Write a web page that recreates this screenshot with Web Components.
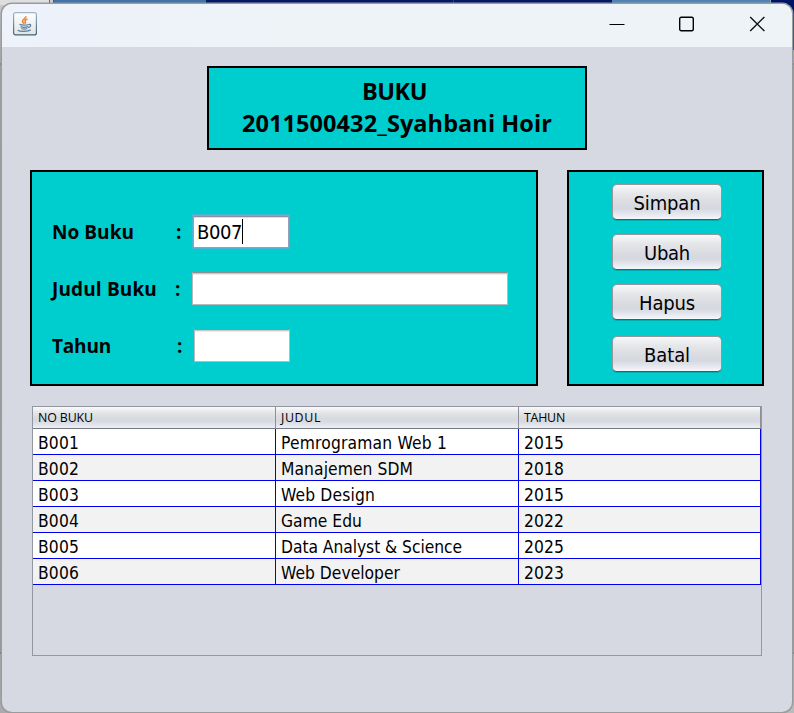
<!DOCTYPE html>
<html lang="id">
<head>
<meta charset="utf-8">
<title>Buku</title>
<style>
html,body{margin:0;width:794px;height:713px;overflow:hidden}
body{font-family:"Open Sans","Noto Sans",sans-serif;color:#000}
</style>
</head>
<body>
<book-desktop>
  <book-window>
    <panel-box slot="title" style="width:380px;height:84px"><book-heading></book-heading></panel-box>
    <panel-box slot="form" style="width:508px;height:216px">
      <form-row style="margin-top:42px" label="No Buku" lw="82" colon="124" fx="140" fw="98" value="B007" focused></form-row>
      <form-row style="margin-top:22px" label="Judul Buku" lw="105" colon="123" fx="140" fw="316"></form-row>
      <form-row style="margin-top:22px" label="Tahun" lw="59" colon="125" fx="142" fw="96"></form-row>
    </panel-box>
    <panel-box slot="actions" style="width:197px;height:216px">
      <push-button style="margin-top:12px" w="67">Simpan</push-button>
      <push-button style="margin-top:14px" w="46">Ubah</push-button>
      <push-button style="margin-top:14px" w="56">Hapus</push-button>
      <push-button style="margin-top:16px" w="46">Batal</push-button>
    </panel-box>
    <book-table slot="table"></book-table>
  </book-window>
</book-desktop>
<script>
const define=(name,html,init)=>customElements.define(name,class extends HTMLElement{
  connectedCallback(){
    if(this.shadowRoot)return;
    this.attachShadow({mode:'open'}).innerHTML=typeof html==='function'?html(this):html;
    if(init)init(this,this.shadowRoot);
  }
});

/* A single line of text whose tracking is adjusted to a given width. */
define('fit-text','<style>:host{display:inline-block;white-space:pre}span{display:inline-block}</style><span><slot></slot></span>',(el,root)=>{
  const span=root.querySelector('span'),want=+el.getAttribute('w'),n=el.textContent.length;
  if(want){
    const have=span.getBoundingClientRect().width;
    span.style.letterSpacing=((want-have)/n)+'px';
  }
});

define('panel-box','<style>:host{display:block;box-sizing:border-box;border:2px solid #000;background:#00cdcd}</style><slot></slot>');

define('book-heading',`<style>
:host{display:flex;flex-direction:column;align-items:center;padding-top:7px;font:700 23.5px/33px "Open Sans","Noto Sans",sans-serif}
fit-text{height:32px}
.a{margin-right:5px}
</style><fit-text class="a" w="65">BUKU</fit-text><fit-text w="310">2011500432_Syahbani Hoir</fit-text>`);

define('form-row',el=>{
  const a=k=>el.getAttribute(k);
  return `<style>
:host{display:grid;grid-template-columns:${a('colon')}px ${a('fx')-a('colon')}px ${a('fw')}px;align-items:center;padding-left:20px;height:35px}
.l{font:700 19px/34px "Open Sans","Noto Sans",sans-serif}
.f{box-sizing:border-box;height:33px;background:#fff;border:1px solid #b8babd;border-top-color:#8d8e92;box-shadow:inset 0 1px #c9c9cb,inset 0 2px #ececec;
 display:flex;align-items:center;font:20px/26px "DejaVu Sans Condensed","DejaVu Sans",sans-serif;font-stretch:condensed}
:host([focused]) .f{height:35px;border:1px solid #49b3d0;box-shadow:inset 0 0 0 1px #9b9eb8,inset 0 2px #8d8fa4,inset 0 3px #dddde2;padding-left:4px}
i{width:1px;height:25px;background:#000}
</style><fit-text class="l" w="${a('lw')}">${a('label')}</fit-text><span class="l">:</span><div class="f">${a('value')?`<fit-text w="45">${a('value')}</fit-text><i></i>`:''}</div>`;
});

define('push-button',el=>`<style>
:host{display:block;width:110px;height:36px;margin-left:43px}
button{all:unset;box-sizing:border-box;display:flex;justify-content:center;align-items:center;width:110px;height:36px;padding-top:1px;border:1px solid #95979d;border-bottom-color:#4e5560;border-radius:5px;
 background:linear-gradient(#f8f8fa,#e6e7ea 25%,#dadce1 52%,#d5d8e0 70%,#e9ecf2 90%,#f5f7fb);box-shadow:0 1px rgba(0,80,90,.25);
 font:20px/26px "DejaVu Sans Condensed","DejaVu Sans",sans-serif;font-stretch:condensed}
</style><button><fit-text w="${el.getAttribute('w')}">${el.textContent}</fit-text></button>`);

const rows=[['B001','Pemrograman Web 1','2015',166],['B002','Manajemen SDM','2018',132],['B003','Web Design','2015',94],
 ['B004','Game Edu','2022',81],['B005','Data Analyst & Science','2025',181],['B006','Web Developer','2023',119]];
const esc=s=>s.replace('&','&amp;');
define('book-table',()=>`<style>
:host{display:block;box-sizing:border-box;width:730px;height:250px;border:1px solid #9297a1}
.r{display:grid;grid-template-columns:243px 243px 242px}
.r>div{box-sizing:border-box;padding-left:5px;height:26px;border-right:1px solid #0000f0;border-bottom:1px solid #0000f0;background:#fff;
 font:17.3px/28px "DejaVu Sans Condensed","DejaVu Sans",sans-serif;font-stretch:condensed}
.r.alt>div{background:#f2f2f2}
.r.h>div{height:22px;font:12.4px/22px "Open Sans","Noto Sans",sans-serif;border-color:#8d9098;border-bottom-color:#747983;
 background:linear-gradient(#fafafb,#e3e4e7 28%,#d8dadf 55%,#d6d9e0 68%,#eceff4)}
</style><div class="r h"><div><fit-text w="55">NO BUKU</fit-text></div><div><fit-text w="40">JUDUL</fit-text></div><div><fit-text w="41">TAHUN</fit-text></div></div>`+
rows.map((r,i)=>`<div class="r${i%2?' alt':''}"><div><fit-text w="41">${r[0]}</fit-text></div><div><fit-text w="${r[3]}">${esc(r[1])}</fit-text></div><div><fit-text w="40">${r[2]}</fit-text></div></div>`).join(''));

define('java-icon',`<style>:host{display:block;width:24px;height:24px}svg{display:block}</style>
<svg width="24" height="24" viewBox="0 0 24 24"><defs><linearGradient id="g" x2="0" y2="1"><stop stop-color="#fff"/><stop offset="1" stop-color="#e2e3e4"/></linearGradient><linearGradient id="b" x2="0" y2="1"><stop stop-color="#a3b5c8"/><stop offset="1" stop-color="#3f6478"/></linearGradient></defs>
<rect x=".6" y=".6" width="22.8" height="22.3" rx="2" fill="url(#g)" stroke="url(#b)" stroke-width="1.2"/>
<path d="M12.8 4.3c.8 2-3.600 2.900-3.300 5 .1 1 1 1.600 1.600 2.400M14.500 7c-1.800.7-3 1.500-2.300 2.600.6.9.3 1.500-.5 2.100" fill="none" stroke="#ee8432" stroke-width="1.600"/>
<path d="M6.500 12.400c2 1 7.500.9 9.500.1M7.500 14.600c2 .8 5.500.7 7.600 0M8.300 16.500c1.700.7 4.200.6 6 0M15.800 12.600c2.500-.9 2.700 2.200-.7 3.100M4.700 18.200c2.700 1.600 10.200 1.400 13-.3" fill="none" stroke="#5b809f" stroke-width="1.300"/></svg>`);

define('title-bar',`<style>
:host{display:flex;align-items:center;box-sizing:border-box;height:43px;background:linear-gradient(90deg,#edf2fb,#eef3f8 35%);padding:0 27px 0 11px}
java-icon{margin-top:-4px}
.c{margin-left:auto;display:flex;gap:54px;align-items:center;margin-top:-3px}svg{display:block}
</style><java-icon></java-icon><div class="c">
<svg width="16" height="16"><path d="M.5 8.500h15" stroke="#000" stroke-width="1"/></svg>
<svg width="16" height="16"><rect x=".7" y="1.200" width="13.600" height="13.600" rx="1.500" fill="none" stroke="#000" stroke-width="1.400"/></svg>
<svg width="16" height="16"><path d="M1.200.9l14.200 14.200M15.400.9L1.200 15.100" stroke="#111" stroke-width="1.400"/></svg></div>`);

define('book-window',`<style>
:host{display:block;box-sizing:border-box;width:790px;height:708px;border-radius:10px;overflow:hidden;background:#d6d9e1;box-shadow:0 0 0 1.500px #999b9e}
.t{display:flex;justify-content:center;padding:19px 0 20px}
.m{display:flex;gap:29px;padding-left:28px}
.b{padding:20px 0 0 30px}
</style><title-bar></title-bar><div class="t"><slot name="title"></slot></div><div class="m"><slot name="form"></slot><slot name="actions"></slot></div><div class="b"><slot name="table"></slot></div>`);

define('book-desktop',`<style>
:host{display:block;box-sizing:border-box;width:794px;height:713px;padding:4px 2px 1px;
background:
 linear-gradient(90deg,#dedede 49px,#666 49px 50px,#ccc 50px 53px,#555 53px 54px,#3f72a8 54px 206px,#001a66 206px 453px,#24407c 453px 454px,#001a66 454px 612px,#4f82b7 612px 770px,#8aa 770px 771px,#001466 771px) 0 0/794px 5px no-repeat,
 linear-gradient(#c8c8c8,#aaa 58px,#777 58px 60px,#a0a0a0 60px 130px,#97989c 647px,#666 647px 649px,#aaa 649px) 0 5px/10px 708px no-repeat,
 linear-gradient(#001466 45px,#aaa 45px 58px,#777 58px 60px,#999 60px 647px,#777 647px 649px,#bbb 649px) 784px 5px/10px 708px no-repeat,#bbb}
</style><slot></slot>`);
</script>
</body>
</html>
